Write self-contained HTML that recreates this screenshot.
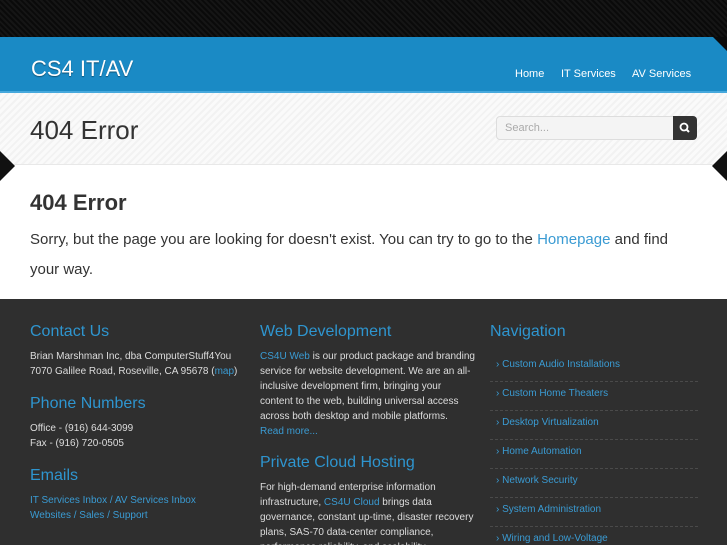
<!DOCTYPE html>
<html><head><meta charset="utf-8"><style>
*{margin:0;padding:0;box-sizing:border-box}
body{width:727px;height:545px;overflow:hidden;font-family:"Liberation Sans",sans-serif;background:#0b0b0b;position:relative}
.top{position:absolute;left:0;top:0;width:727px;height:37px;background:repeating-linear-gradient(45deg,#0a0a0a 0 2px,#151515 2px 4px)}
.blue{position:absolute;left:0;top:37px;width:727px;height:56px;background:#1a8ac5;border-bottom:2px solid #46a8dc}
.cut{position:absolute;right:0;top:37px;width:0;height:0;border-top:14px solid #0b0b0b;border-left:14px solid transparent}
.logo{position:absolute;left:31px;top:56px;font-size:22px;color:#fff;text-shadow:0 1px 1px rgba(0,0,0,.4)}
.nav{position:absolute;top:68px;font-size:11px;color:#fff}
.band{position:absolute;left:0;top:93px;width:727px;height:72px;background:repeating-linear-gradient(135deg,#f2f2f2 0 2px,#fafafa 2px 5px);border-bottom:1px solid #e8e8e8}
.band h1{position:absolute;left:30px;top:22px;font-weight:normal;font-size:26px;color:#333}
.search{position:absolute;left:496px;top:116px;width:178px;height:24px;border:1px solid #ddd;border-radius:4px 0 0 4px;background:#f4f4f4;font-size:11px;color:#aaa;padding:5px 8px}
.sbtn{position:absolute;left:673px;top:116px;width:24px;height:24px;background:#333;border-radius:0 4px 4px 0}
.main{position:absolute;left:0;top:165px;width:727px;height:134px;background:#fff}
.main h2{position:absolute;left:30px;top:25px;font-size:22px;color:#333}
.main p{position:absolute;left:30px;top:60px;width:655px;font-size:15px;line-height:30px;color:#333}
a,.a{color:#3a9bd3;text-decoration:none}
.fl{position:absolute;width:0;height:0}
.foot{position:absolute;left:0;top:299px;width:727px;height:246px;background:#2f2f2f;overflow:hidden}
.foot h3{position:absolute;font-weight:normal;font-size:16px;color:#2e95cf}
.foot p{position:absolute;font-size:10px;line-height:15px;color:#ddd}
.navl{position:absolute;left:490px;top:54px;width:208px}
.navl div{height:29px;border-bottom:1px dashed #4a4a4a;font-size:10px;color:#3a9bd3;padding:6px 0 0 6px}
</style></head><body>
<div class="top"></div>
<div class="blue"></div><div class="cut"></div>
<div class="logo">CS4 IT/AV</div>
<div class="nav" style="left:515px">Home</div>
<div class="nav" style="left:561px">IT Services</div>
<div class="nav" style="left:632px">AV Services</div>
<div class="band"><h1>404 Error</h1></div>
<div class="search">Search...</div>
<div class="sbtn"><svg width="24" height="24"><circle cx="11" cy="11" r="3.5" fill="none" stroke="#fff" stroke-width="1.8"/><line x1="13.5" y1="13.5" x2="16" y2="16" stroke="#fff" stroke-width="2"/></svg></div>
<div class="main"><h2>404 Error</h2><p>Sorry, but the page you are looking for doesn't exist. You can try to go to the <a>Homepage</a> and find your way.</p></div>
<div class="fl" style="left:0;top:151px;border-top:15px solid transparent;border-bottom:15px solid transparent;border-left:15px solid #111"></div>
<div class="fl" style="right:0;top:151px;border-top:15px solid transparent;border-bottom:15px solid transparent;border-right:15px solid #111"></div>
<div class="foot">
<h3 style="left:30px;top:24px">Contact Us</h3>
<p style="left:30px;top:50px">Brian Marshman Inc, dba ComputerStuff4You<br>7070 Galilee Road, Roseville, CA 95678 (<span class="a">map</span>)</p>
<h3 style="left:30px;top:96px">Phone Numbers</h3>
<p style="left:30px;top:122px">Office - (916) 644-3099<br>Fax - (916) 720-0505</p>
<h3 style="left:30px;top:168px">Emails</h3>
<p style="left:30px;top:194px"><span class="a">IT Services Inbox / AV Services Inbox<br>Websites / Sales / Support</span></p>
<h3 style="left:260px;top:24px">Web Development</h3>
<p style="left:260px;top:50px;width:215px"><span class="a">CS4U Web</span> is our product package and branding service for website development. We are an all-inclusive development firm, bringing your content to the web, building universal access across both desktop and mobile platforms.<br><span class="a">Read more...</span></p>
<h3 style="left:260px;top:155px">Private Cloud Hosting</h3>
<p style="left:260px;top:181px;width:215px">For high-demand enterprise information infrastructure, <span class="a">CS4U Cloud</span> brings data governance, constant up-time, disaster recovery plans, SAS-70 data-center compliance, performance reliability, and scalability</p>
<h3 style="left:490px;top:24px">Navigation</h3>
<div class="navl">
<div>› Custom Audio Installations</div><div>› Custom Home Theaters</div><div>› Desktop Virtualization</div><div>› Home Automation</div><div>› Network Security</div><div>› System Administration</div><div>› Wiring and Low-Voltage</div>
</div>
</div>
</body></html>
